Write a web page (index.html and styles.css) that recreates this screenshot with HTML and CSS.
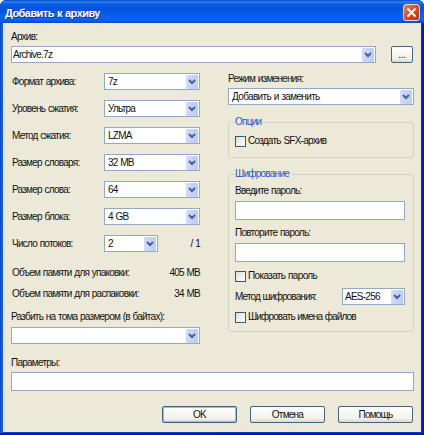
FILE: index.html
```html
<!DOCTYPE html>
<html lang="ru">
<head>
<meta charset="utf-8">
<title>Добавить к архиву</title>
<link rel="stylesheet" href="styles.css">
</head>
<body>
<svg class="defs" width="0" height="0"><symbol id="chev" viewBox="0 0 8 6"><path d="M1 1L4 4L7 1" fill="none" stroke="#4a5f8c" stroke-width="2"/></symbol></svg>
<div class="window">
  <header class="titlebar">
    <span class="title">Добавить к архиву</span>
    <span class="close"><svg width="15" height="15" viewBox="0 0 15 15"><path d="M3.5 3.5L11.500 11.500M11.500 3.500L3.500 11.500" stroke="#fff" stroke-width="1.900"/></svg></span>
  </header>
  <main class="content">
    <div class="label archive-label">Архив:</div>
    <div class="archive-row">
      <div class="combo archive"><span>Archive.7z</span><i><svg><use href="#chev"/></svg></i></div>
      <div class="button browse">...</div>
    </div>
    <div class="columns">
      <section class="left">
        <div class="row"><span class="label">Формат архива:</span><div class="combo"><span>7z</span><i><svg><use href="#chev"/></svg></i></div></div>
        <div class="row"><span class="label">Уровень сжатия:</span><div class="combo"><span>Ультра</span><i><svg><use href="#chev"/></svg></i></div></div>
        <div class="row"><span class="label">Метод сжатия:</span><div class="combo"><span>LZMA</span><i><svg><use href="#chev"/></svg></i></div></div>
        <div class="row"><span class="label">Размер словаря:</span><div class="combo"><span>32 MB</span><i><svg><use href="#chev"/></svg></i></div></div>
        <div class="row"><span class="label">Размер слова:</span><div class="combo"><span>64</span><i><svg><use href="#chev"/></svg></i></div></div>
        <div class="row"><span class="label">Размер блока:</span><div class="combo"><span>4 GB</span><i><svg><use href="#chev"/></svg></i></div></div>
        <div class="row"><span class="label">Число потоков:</span><div class="combo threads"><span>2</span><i><svg><use href="#chev"/></svg></i></div><span class="total">/ 1</span></div>
        <div class="memory first"><span>Объем памяти для упаковки:</span><span>405 MB</span></div>
        <div class="memory"><span>Объем памяти для распаковки:</span><span>34 MB</span></div>
        <div class="label split">Разбить на тома размером (в байтах):</div>
        <div class="combo"><span></span><i><svg><use href="#chev"/></svg></i></div>
      </section>
      <section class="right">
        <div class="label mode">Режим изменения:</div>
        <div class="combo"><span class="action">Добавить и заменить</span><i><svg><use href="#chev"/></svg></i></div>
        <div class="group options">
          <div class="legend"><span>Опции</span></div>
          <div class="check"><b></b><span>Создать SFX-архив</span></div>
        </div>
        <div class="group crypto">
          <div class="legend"><span>Шифрование</span></div>
          <div class="label enter">Введите пароль:</div>
          <div class="field"></div>
          <div class="label repeat">Повторите пароль:</div>
          <div class="field"></div>
          <div class="check show"><b></b><span>Показать пароль</span></div>
          <div class="method"><span class="label">Метод шифрования:</span><div class="combo"><span>AES-256</span><i><svg><use href="#chev"/></svg></i></div></div>
          <div class="check names"><b></b><span>Шифровать имена файлов</span></div>
        </div>
      </section>
    </div>
    <div class="label params">Параметры:</div>
    <div class="field"></div>
    <footer class="buttons">
      <div class="button default">OK</div>
      <div class="button">Отмена</div>
      <div class="button">Помощь</div>
    </footer>
  </main>
</div>
</body>
</html>
```
FILE: styles.css
```css
* { box-sizing: border-box; }
body {
  margin: 0;
  width: 424px;
  height: 435px;
  overflow: hidden;
  background: #fff;
  font: 10px/12px "Liberation Sans", Arial, sans-serif;
  letter-spacing: -0.75px;
  word-spacing: 0.6px;
  color: #111;
  white-space: nowrap;
}
.defs { position: absolute; }
.window {
  width: 424px;
  height: 435px;
  background: linear-gradient(90deg, #0842c8 0, #1163ef 2px, #1163ef 3px, #0842c8 4px, #0536c4 421px, #001a8e 424px);
  border-radius: 6px 6px 0 0;
  border-bottom: 2px solid #001a9c;
  overflow: hidden;
  padding: 0 3px 1px;
}
.titlebar {
  height: 23px;
  margin: 0 -3px;
  padding: 2px 4px 0 5px;
  display: flex;
  align-items: center;
  justify-content: space-between;
  background: linear-gradient(#0648c2 0, #2b82f4 2px, #0b5ce2 4px, #0454dc 9px, #0460f4 16px, #0463fa 20px, #0348c6 23px);
}
.title {
  color: #fff;
  font: bold 11px/14px "Liberation Sans", Arial, sans-serif;
  letter-spacing: -0.55px;
  text-shadow: 1px 1px 0 #123b92;
}
.close {
  width: 17px;
  height: 17px;
  border: 1px solid #f0d5d0;
  border-radius: 3px;
  background: linear-gradient(135deg, #eb8064, #db4a25 50%, #be3616);
}
.close svg { display: block; }
.content {
  height: 409px;
  background: #ece9d8;
  padding: 8px 7px 0 8px;
}
.archive-label { height: 15px; }
.archive-row { display: flex; justify-content: space-between; padding-right: 1px; }
.combo {
  height: 17px;
  background: #fff;
  border: 1px solid #91a9c3;
  display: flex;
  justify-content: space-between;
  align-items: center;
  padding: 0 1px 0 3px;
}
.combo i {
  flex: none;
  width: 12px;
  height: 14px;
  border-radius: 1px;
  background: linear-gradient(90deg, #cfdcfb, #b9ccf7);
  display: flex;
  align-items: center;
  justify-content: center;
}
.combo i svg { width: 8px; height: 6px; }
.archive { width: 365px; padding-left: 1px; }
.button {
  height: 17px;
  border: 1px solid #3f6683;
  border-radius: 2px;
  background: linear-gradient(#fff, #f3f2ec 75%, #dcd8ca);
  text-align: center;
  line-height: 16px;
}
.browse { width: 22px; letter-spacing: -0.2px; }
.columns { display: flex; justify-content: space-between; height: 288px; }
.left { width: 189px; padding-top: 10px; }
.row { height: 17px; margin-bottom: 10px; display: flex; align-items: center; }
.row .label { width: 93px; padding-left: 1px; }
.row .combo { width: 96px; }
.row .threads { width: 54px; }
.total { margin-left: auto; }
.memory { display: flex; justify-content: space-between; height: 20px; padding-left: 1px; }
.memory.first { margin-top: 15px; height: 21px; }
.split { margin-top: 3px; margin-bottom: 4px; }
.right { width: 186px; padding-top: 10px; }
.mode { margin-bottom: 3px; }
.right > .combo { margin-bottom: 17px; }
.action { letter-spacing: -0.65px; }
.group { border: 1px solid #d3d1bf; border-radius: 3px; padding: 0 8px 0 6px; }
.legend { height: 12px; margin-top: -7px; color: #2258c4; }
.legend span { background: #ece9d8; padding-right: 2px; }
.options { height: 36px; margin-bottom: 16px; }
.crypto { height: 158px; }
.check { display: flex; gap: 2px; align-items: center; height: 12px; }
.check b {
  width: 11px;
  height: 11px;
  border: 1px solid #2f5a86;
  background: linear-gradient(135deg, #dfdfd9, #fff);
}
.options .check { margin-top: 7px; }
.field { height: 19px; background: #fff; border: 1px solid #91a9c3; }
.enter { margin-top: 5px; margin-bottom: 4px; }
.repeat { margin-top: 7px; margin-bottom: 4px; }
.show { margin-top: 8px; letter-spacing: -0.65px; }
.method { display: flex; align-items: center; justify-content: space-between; margin: 6px 0; }
.method .label, .names { letter-spacing: -0.85px; }
.method .combo { width: 63px; padding-left: 2px; }
.params { margin-bottom: 3px; margin-top: 6px; }
.buttons { display: flex; justify-content: flex-end; gap: 13px; margin-top: 15px; padding-right: 1px; }
.buttons .button { width: 75px; }
.default { box-shadow: inset 0 0 0 1px #9db8ec; }
```
